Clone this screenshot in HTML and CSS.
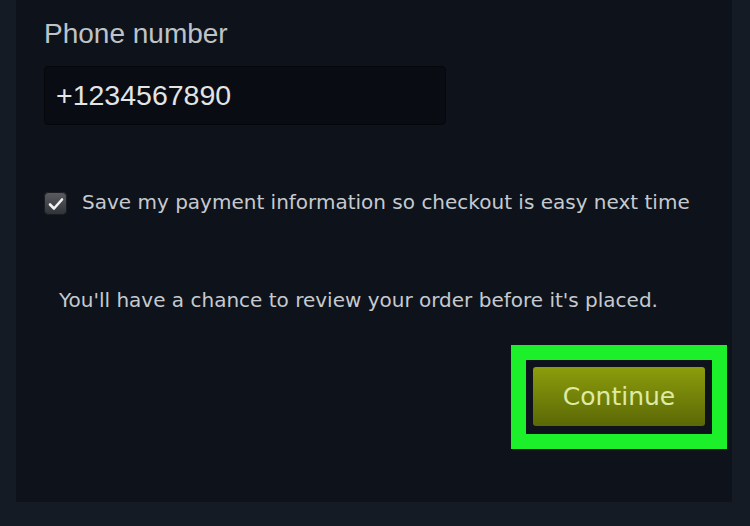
FILE: index.html
```html
<!DOCTYPE html>
<html lang="en">
<head>
<meta charset="utf-8">
<link rel="stylesheet" href="styles.css">
</head>
<body>
<div class="panel">
  <label class="field-label">Phone number</label>
  <div class="input">+1234567890</div>
  <div class="check-row">
    <span class="checkbox">
      <svg width="16" height="14" viewBox="0 0 16 14"><path d="M2 7.5 L6 11.5 L14 2.5" fill="none" stroke="#f2f2f2" stroke-width="2.6" stroke-linecap="round" stroke-linejoin="round"/></svg>
    </span>
    <span class="check-text">Save my payment information so checkout is easy next time</span>
  </div>
  <p class="note">You'll have a chance to review your order before it's placed.</p>
  <div class="actions">
    <div class="highlight">
      <button class="continue">Continue</button>
    </div>
  </div>
</div>
</body>
</html>
```
FILE: styles.css
```css
html, body {
  margin: 0;
  padding: 0;
}
body {
  width: 750px;
  height: 526px;
  background: #151b25;
  overflow: hidden;
}
.panel {
  margin: 0 18px 0 16px;
  height: 502px;
  background: #0e131b;
  padding: 18px 0 0 28px;
  box-sizing: border-box;
  display: flex;
  flex-direction: column;
}
.field-label {
  font-family: "Liberation Sans", Arial, sans-serif;
  font-size: 28px;
  color: #bfc3c8;
  line-height: 32px;
}
.input {
  margin-top: 16px;
  width: 402px;
  height: 59px;
  box-sizing: border-box;
  background: #090c12;
  border: 1px solid #05070b;
  border-radius: 4px;
  padding: 0 0 0 11px;
  font-family: "Liberation Sans", Arial, sans-serif;
  font-size: 28.5px;
  color: #e2e4e6;
  display: flex;
  align-items: center;
}
.check-row {
  margin-top: 63px;
  display: flex;
  align-items: center;
  gap: 15px;
}
.checkbox {
  width: 23px;
  height: 23px;
  border-radius: 5px;
  background: linear-gradient(#5a5d62, #2e3136);
  box-shadow: inset 0 0 0 1px #1b1d21;
  display: flex;
  align-items: center;
  justify-content: center;
  margin-top: 4px;
}
.check-text {
  font-family: "DejaVu Sans", sans-serif;
  font-size: 20px;
  color: #c6cace;
}
.note {
  margin: 73px 0 0 15px;
  font-family: "DejaVu Sans", sans-serif;
  font-size: 20px;
  color: #c6cace;
}
.actions {
  display: flex;
  justify-content: flex-end;
  margin-top: 33px;
  padding-right: 5px;
}
.highlight {
  background: #0e131b;
  border: 15px solid #1cf02a;
  padding: 7px 7px 8px 7px;
  background-clip: padding-box;
}
.continue {
  width: 172px;
  height: 59px;
  border: none;
  border-radius: 3px;
  background: linear-gradient(#8c9d0c, #5b6806);
  color: #dfeaa3;
  font-family: "DejaVu Sans", sans-serif;
  font-size: 25px;
  display: block;
  padding: 0;
}
```
